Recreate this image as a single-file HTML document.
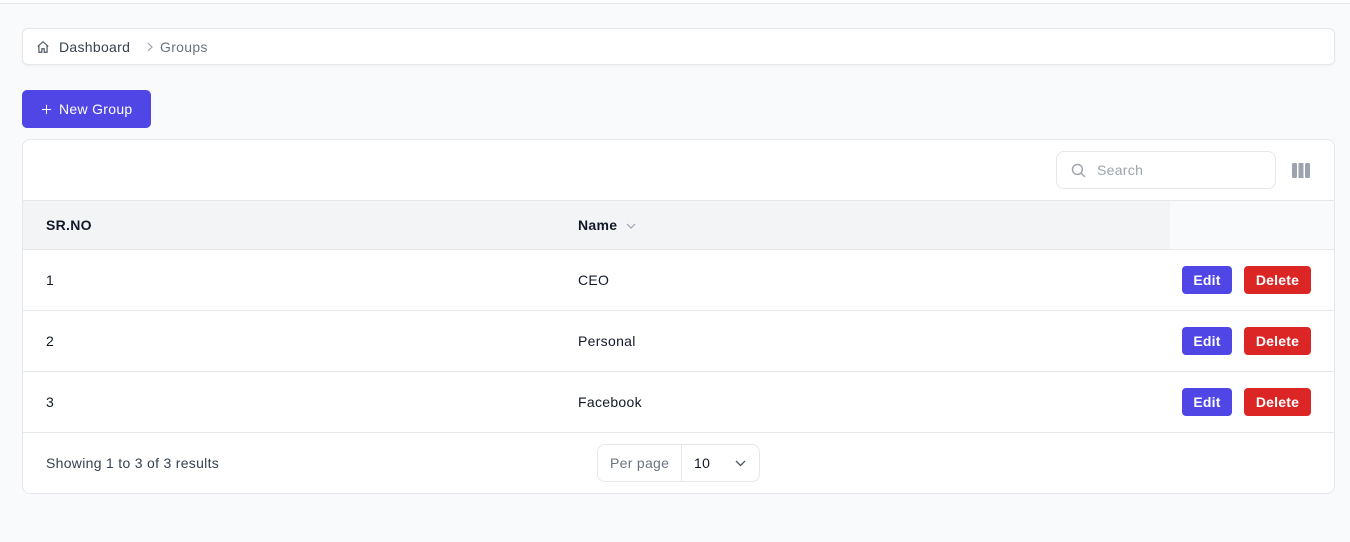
<!DOCTYPE html>
<html><head><style>
*{box-sizing:border-box;margin:0;padding:0}
body{width:1350px;height:542px;background:#f9fafb;font-family:"Liberation Sans",sans-serif;font-size:14px;color:#111827;position:relative;overflow:hidden;letter-spacing:0.3px}
.a{position:absolute}
.topline{left:0;top:0;width:1350px;height:4px;background:#fff;border-bottom:1px solid #e5e7eb}
.bc{left:22px;top:28px;width:1313px;height:37px;background:#fff;border:1px solid #e5e7eb;border-radius:6px;box-shadow:0 1px 2px rgba(0,0,0,.05)}
.btn{left:22px;top:90px;width:129px;height:38px;background:#4f46e5;border-radius:5px;color:#fff;font-size:14px}
.card{left:22px;top:139px;width:1313px;height:355px;background:#fff;border:1px solid #e5e7eb;border-radius:8px;overflow:hidden}
.row{left:-1px;width:1313px;height:61px;border-top:1px solid #e5e7eb}
.cell{position:absolute;top:0;line-height:60px}
.e{position:absolute;top:16px;height:28px;border-radius:4px;color:#fff;font-weight:bold;font-size:14px;text-align:center;line-height:28px;letter-spacing:0.2px}
</style></head><body>
<div class="a topline"></div>
<div class="a bc">
<svg class="a" style="left:13px;top:11px" width="14" height="14" viewBox="0 0 24 24" fill="none" stroke="#4b5563" stroke-width="2"><path d="M3 11l9-8 9 8M5 9v12h5v-6h4v6h5V9"/></svg>
<span class="a" style="left:36px;top:10px;color:#374151">Dashboard</span>
<svg class="a" style="left:123px;top:13px" width="8" height="10" viewBox="0 0 8 10" fill="none" stroke="#9ca3af" stroke-width="1.2"><path d="M2 1l4 4-4 4"/></svg>
<span class="a" style="left:137px;top:10px;color:#6b7280">Groups</span>
</div>
<div class="a btn">
<svg class="a" style="left:19px;top:14px" width="11" height="11" viewBox="0 0 12 12" stroke="#fff" stroke-width="1.1"><path d="M6 1v10M1 6h10"/></svg>
<span class="a" style="left:37px;top:11px">New Group</span>
</div>
<div class="a card">
<div class="a" style="left:1033px;top:11px;width:220px;height:38px;border:1px solid #e5e7eb;border-radius:8px">
<svg class="a" style="left:13px;top:10px" width="17" height="17" viewBox="0 0 24 24" fill="none" stroke="#9ca3af" stroke-width="2"><circle cx="10.5" cy="10.5" r="7"/><path d="M16 16l5 5"/></svg>
<span class="a" style="left:40px;top:10px;color:#9ca3af">Search</span>
</div>
<svg class="a" style="left:1269px;top:23px" width="18" height="15" viewBox="0 0 18 15" fill="#9ca3af"><rect x="0" y="0" width="5" height="15" rx="1.5"/><rect x="6.5" y="0" width="5" height="15"/><rect x="13" y="0" width="5" height="15" rx="1.5"/></svg>
<div class="a" style="left:-1px;top:60px;width:1313px;height:49px;background:#f9fafb;border-top:1px solid #e5e7eb">
<div class="a" style="left:0;top:0;width:1148px;height:48px;background:#f3f4f6"></div>
<span class="a" style="left:24px;top:16px;font-weight:bold">SR.NO</span>
<span class="a" style="left:556px;top:16px;font-weight:bold">Name</span>
<svg class="a" style="left:604px;top:22px" width="10" height="6" viewBox="0 0 10 6" fill="none" stroke="#9ca3af" stroke-width="1.2"><path d="M1 1l4 4 4-4"/></svg>
</div>
<div class="a row" style="top:109px"><span class="cell" style="left:24px">1</span><span class="cell" style="left:556px">CEO</span><div class="e" style="left:1160px;width:50px;background:#4f46e5">Edit</div><div class="e" style="left:1222px;width:67px;background:#dc2626">Delete</div></div>
<div class="a row" style="top:170px"><span class="cell" style="left:24px">2</span><span class="cell" style="left:556px">Personal</span><div class="e" style="left:1160px;width:50px;background:#4f46e5">Edit</div><div class="e" style="left:1222px;width:67px;background:#dc2626">Delete</div></div>
<div class="a row" style="top:231px"><span class="cell" style="left:24px">3</span><span class="cell" style="left:556px">Facebook</span><div class="e" style="left:1160px;width:50px;background:#4f46e5">Edit</div><div class="e" style="left:1222px;width:67px;background:#dc2626">Delete</div></div>
<div class="a row" style="top:292px;height:62px"><span class="cell" style="left:24px;color:#374151">Showing 1 to 3 of 3 results</span>
<div class="a" style="left:575px;top:11px;width:163px;height:38px;border:1px solid #e5e7eb;border-radius:8px">
<span class="a" style="left:12px;top:10px;color:#6b7280">Per page</span>
<div class="a" style="left:83px;top:0;width:1px;height:36px;background:#e5e7eb"></div>
<span class="a" style="left:96px;top:10px">10</span>
<svg class="a" style="left:137px;top:15px" width="11" height="7" viewBox="0 0 11 7" fill="none" stroke="#4b5563" stroke-width="1.3"><path d="M1 1l4.5 4.5L10 1"/></svg>
</div></div>
</div>
</body></html>
